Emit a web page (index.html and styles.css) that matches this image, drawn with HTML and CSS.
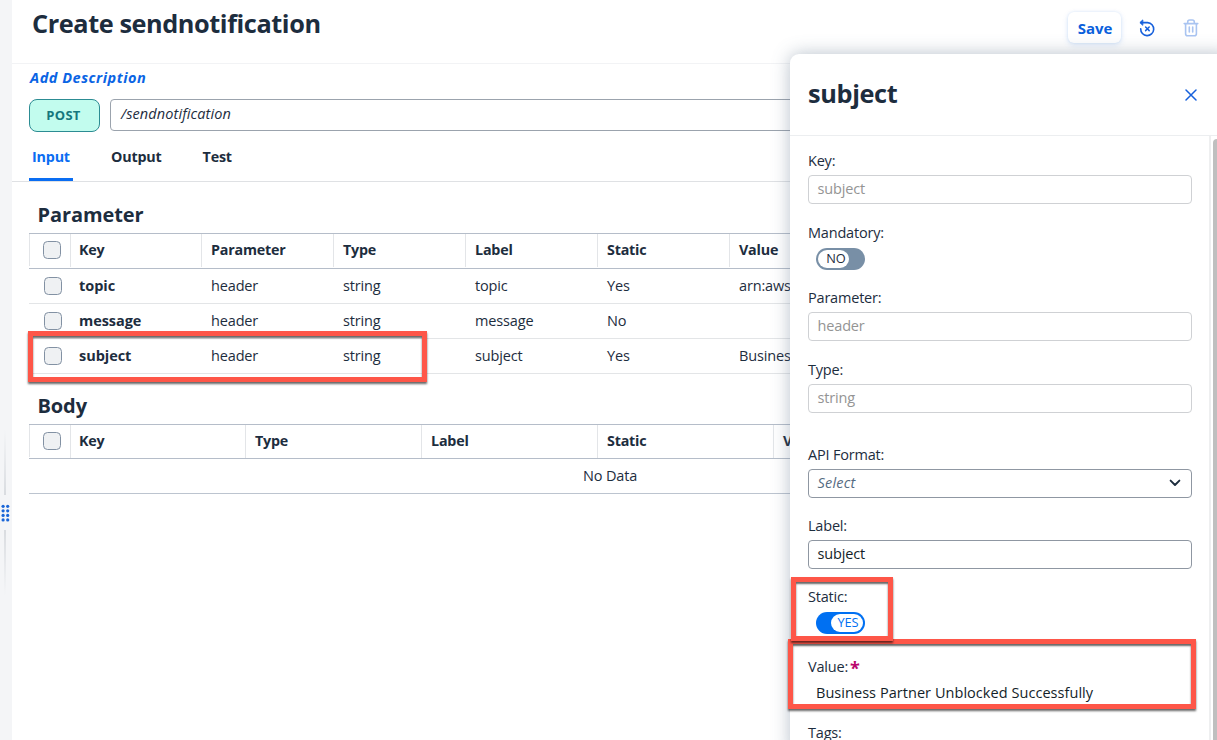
FILE: index.html
```html
<!DOCTYPE html>
<html lang="en">
<head>
<meta charset="utf-8">
<title>Create sendnotification</title>
<link rel="stylesheet" href="styles.css">
</head>
<body>
<div class="app">
  <div class="splitter">
    <div class="splitter-line up"></div>
    <svg class="grip" width="10" height="20" viewBox="0 0 10 20" fill="#1a66d8">
      <circle cx="3.1" cy="3.3" r="1.6"/><circle cx="7.7" cy="3.3" r="1.6"/>
      <circle cx="3.1" cy="7.8" r="1.6"/><circle cx="7.7" cy="7.8" r="1.6"/>
      <circle cx="3.1" cy="12.4" r="1.6"/><circle cx="7.7" cy="12.4" r="1.6"/>
      <circle cx="3.1" cy="16.9" r="1.6"/><circle cx="7.7" cy="16.9" r="1.6"/>
    </svg>
    <div class="splitter-line down"></div>
  </div>
  <main class="main">
    <header class="header">
      <h1 class="title">Create sendnotification</h1>
      <div class="actions">
        <button class="save">Save</button>
        <svg class="icon-reset" width="18" height="18" viewBox="0 0 18 18" fill="none" stroke="#1660dc" stroke-width="1.6" stroke-linecap="round" stroke-linejoin="round">
          <path d="M3.2 3.6H9.6a6.5 6.5 0 1 1-6.9 6.2"/>
          <path d="M4.5 1.2 1.9 3.6l2.6 2.4z" fill="#1660dc" stroke-width="1"/>
          <path d="M7.6 8l3.6 3.6M11.2 8 7.6 11.6" stroke-width="1.5"/>
        </svg>
        <svg class="icon-trash" width="16" height="18" viewBox="0 0 16 18" fill="none" stroke="#a9c4f1" stroke-width="1.6" stroke-linecap="round" stroke-linejoin="round">
          <path d="M1.2 4.6h13.6M4.7 4.4V3a2 2 0 0 1 2-2h2.6a2 2 0 0 1 2 2v1.4M2.6 4.8v10a2 2 0 0 0 2 2h6.8a2 2 0 0 0 2-2v-10M6.3 8v5M9.7 8v5"/>
        </svg>
      </div>
    </header>
    <a class="add-desc">Add Description</a>
    <div class="endpoint">
      <span class="method">POST</span>
      <div class="url">/sendnotification</div>
    </div>
    <nav class="tabs">
      <span class="tab active">Input</span>
      <span class="tab">Output</span>
      <span class="tab">Test</span>
    </nav>
    <h2 class="section">Parameter</h2>
    <div class="table params">
      <div class="row head"><div class="cell check"><i class="box"></i></div><div class="cell">Key</div><div class="cell">Parameter</div><div class="cell">Type</div><div class="cell">Label</div><div class="cell">Static</div><div class="cell">Value</div></div>
      <div class="row"><div class="cell check"><i class="box"></i></div><div class="cell key">topic</div><div class="cell">header</div><div class="cell">string</div><div class="cell">topic</div><div class="cell">Yes</div><div class="cell">arn:aws</div></div>
      <div class="row"><div class="cell check"><i class="box"></i></div><div class="cell key">message</div><div class="cell">header</div><div class="cell">string</div><div class="cell">message</div><div class="cell">No</div><div class="cell"></div></div>
      <div class="row"><div class="cell check"><i class="box"></i></div><div class="cell key">subject</div><div class="cell">header</div><div class="cell">string</div><div class="cell">subject</div><div class="cell">Yes</div><div class="cell">Busines</div></div>
    </div>
    <h2 class="section">Body</h2>
    <div class="table body">
      <div class="row head"><div class="cell check"><i class="box"></i></div><div class="cell">Key</div><div class="cell">Type</div><div class="cell">Label</div><div class="cell">Static</div><div class="cell">V</div></div>
      <div class="empty">No Data</div>
    </div>
  </main>

  <aside class="panel">
    <div class="panel-head">
      <h2 class="panel-title">subject</h2>
      <svg width="12" height="12" viewBox="0 0 12 12" stroke="#1660dc" stroke-width="1.5" stroke-linecap="round"><path d="M1 1l10 10M11 1 1 11"/></svg>
    </div>
    <div class="panel-body">
      <div class="form">
        <div class="field"><label>Key:</label><div class="input readonly">subject</div></div>
        <div class="field switch-field"><label>Mandatory:</label><div class="switch off"><span>NO</span></div></div>
        <div class="field"><label>Parameter:</label><div class="input readonly">header</div></div>
        <div class="field type"><label>Type:</label><div class="input readonly">string</div></div>
        <div class="field select-field"><label>API Format:</label>
          <div class="input select"><em>Select</em><svg width="12" height="8" viewBox="0 0 12 8" fill="none" stroke="#1d2d3e" stroke-width="1.9" stroke-linecap="round" stroke-linejoin="round"><path d="M1.6 1.6 6 6l4.4-4.4"/></svg></div></div>
        <div class="field label-field"><label>Label:</label><div class="input">subject</div></div>
        <div class="field static-field"><label>Static:</label><div class="switch on"><span>YES</span></div></div>
        <div class="field value-field"><label>Value:<b class="req">*</b></label><div class="value">Business Partner Unblocked Successfully</div></div>
        <div class="field"><label>Tags:</label></div>
      </div>
      <div class="scroll"><div class="thumb"></div></div>
    </div>
  </aside>

  <div class="mark mark-row"></div>
  <div class="mark mark-value"></div>
  <div class="mark mark-static"></div>
</div>
</body>
</html>
```
FILE: styles.css
```css
* { box-sizing: border-box; }
body { margin: 0; font-family: "Open Sans", "Noto Sans", sans-serif; font-size: 14.5px; letter-spacing: -.15px; color: #1d2d3e; background: #fff; }
h1, h2 { margin: 0; font-weight: 700; white-space: nowrap; }
svg { display: block; flex: none; }
.app { position: relative; display: flex; width: 1217px; height: 740px; overflow: hidden; }

.splitter { width: 12px; flex: none; background: #f4f5f7; display: flex; flex-direction: column; padding-top: 430px; }
.splitter-line { width: 1.5px; height: 65px; margin-left: 4px; }
.up { background: linear-gradient(#f4f5f7, #d9dce0); }
.down { background: linear-gradient(#d9dce0, #f4f5f7); }
.grip { margin: 8px 0 7px; }

.main { flex: 1; min-width: 0; display: flex; flex-direction: column; align-items: stretch; }
.header { height: 64px; flex: none; border-bottom: 1.5px solid #f2f3f5; display: flex; justify-content: space-between; align-items: flex-start; padding: 0 18px 0 20px; }
.title { font-size: 25.3px; line-height: 34px; padding-top: 6px; letter-spacing: -.42px; }
.actions { display: flex; align-items: center; padding-top: 12px; }
.save { width: 53px; height: 31px; border: 0; padding: 0 0 0 1px; border-radius: 6px; background: #fff; color: #0a5fdc; font: 700 15px/30px "Open Sans", sans-serif; box-shadow: 0 0 3px rgba(0, 100, 217, .13), 0 2px 6px rgba(0, 100, 217, .13); }
.icon-reset { margin-left: 17px; }
.icon-trash { margin-left: 27px; }

.add-desc { margin: 4px 0 0 18px; height: 20px; line-height: 20px; font-weight: 700; font-style: italic; letter-spacing: .53px; color: #0a64e4; }
.endpoint { display: flex; gap: 10px; margin: 11px 0 0 17px; height: 33px; flex: none; }
.method { width: 71px; height: 33px; border: 1.5px solid #2c8c93; border-radius: 8px; background: #c2fcee; color: #16777d; font-weight: 700; font-size: 13px; letter-spacing: .3px; line-height: 30px; padding-right: 2px; text-align: center; }
.url { flex: 1; height: 31.5px; border: 1.5px solid #9ba3ad; border-radius: 4px; padding-left: 10px; font-style: italic; letter-spacing: .1px; line-height: 28px; }
.tabs { display: flex; height: 50px; flex: none; border-bottom: 1.5px solid #dfe1e4; padding-left: 17px; }
.tab { font-weight: 700; font-size: 14.3px; letter-spacing: -.18px; line-height: 20px; padding: 15px 3px 0; margin-right: 35px; }
.tab.active { color: #0a6df2; border-bottom: 3px solid #0a6df2; width: 44px; border-radius: 2px 2px 0 0; }

.section { font-size: 20px; letter-spacing: -.1px; line-height: 26px; margin: 20px 0 5px 25.5px; }
.params + .section { margin-top: 19px; }
.table { margin-left: 17px; width: 1100px; border-top: 1px solid #b5bdc9; }
.row { display: grid; height: 35px; border-bottom: 1px solid #e3e5e7; }
.params .row { grid-template-columns: 41px 131px repeat(5, 132px); }
.body .row { grid-template-columns: 41px 175px repeat(4, 176px); }
.cell { padding-left: 10px; line-height: 34px; white-space: nowrap; }
.cell:nth-child(2) { padding-left: 9px; }
.row.head { font-weight: 700; font-size: 14.3px; letter-spacing: -.2px; height: 34.5px; border-bottom: 1px solid #b5bdc9; }
.head .cell { border-left: 1px solid #e3e5e8; line-height: 32px; height: 33px; padding-left: 9px; }
.head .cell:nth-child(2) { padding-left: 8px; }
.key { font-weight: 700; letter-spacing: -.05px; }
.cell.check { display: flex; align-items: center; padding-left: 15px; height: 34px; }
.head .cell.check { padding-left: 13px; height: 32px; }
.box { width: 18px; height: 18px; border: 1.3px solid #8291a3; border-radius: 4.5px; background: #eff1f3; }
.empty { height: 34.5px; line-height: 33px; border-bottom: 1.5px solid #bcc4cf; padding-left: 554px; }

.panel { position: absolute; left: 790px; top: 54px; width: 440px; height: 700px; background: #fff; border-radius: 9px 0 0 0; box-shadow: 0 0 18px rgba(85, 107, 130, .42); }
.panel-head { height: 82px; border-bottom: 1.5px solid #eceef0; display: flex; align-items: center; justify-content: space-between; padding: 0 33px 0 18px; }
.panel-title { font-size: 25.3px; letter-spacing: -.35px; line-height: 34px; padding-bottom: 3px; }
.panel-body { display: flex; width: 427px; height: 604px; }
.form { flex: 1; padding: 15px 17px 0 18px; }
.field { height: 72px; }
.field label { display: block; height: 20px; line-height: 20px; margin-bottom: 4px; white-space: nowrap; letter-spacing: -.2px; }
.switch-field { height: 65px; }
.type { height: 84px; }
.select-field { padding-top: .5px; }
.label-field { height: 71px; }
.static-field { height: 70px; }
.value-field { height: 66px; }
.input { width: 384px; height: 29px; border: 1px solid #8f97a2; border-radius: 4px; line-height: 26px; padding: 0 10px 0 8.5px; color: #131e29; }
.input.readonly { border-color: #cfd1d4; color: #949494; }
.select { display: flex; align-items: center; justify-content: space-between; }
.select em { color: #556b82; letter-spacing: .2px; }
.switch { margin: 5px 0 0 8px; width: 48.5px; height: 21.5px; border-radius: 11px; display: flex; padding: 2px; }
.switch span { height: 17.5px; line-height: 17.5px; border-radius: 9px; background: #fff; font-size: 12.8px; text-align: center; }
.off { background: #788fa6; }
.off span { width: 31px; padding-left: 5px; }
.on { background: #0070f2; justify-content: flex-end; }
.on span { width: 32px; color: #0070f2; padding-left: 3px; }
.req { color: #ba066c; font-size: 18px; line-height: 10px; vertical-align: -3px; margin-left: 2px; }
.value { margin-top: 6px; padding-left: 8px; line-height: 20px; color: #131e29; white-space: nowrap; letter-spacing: .05px; }
.scroll { width: 8px; border-left: 2px solid #eeeff0; padding: 3px 0 0 2px; }
.thumb { height: 601px; background: #bfbfbf; border-radius: 4px 0 0 0; }

.mark { position: absolute; border: 5.5px solid #fe5648; box-shadow: 0 2px 2px rgba(0, 0, 0, .6), inset 0 2px 2px rgba(0, 0, 0, .6); }
.mark-row { left: 28px; top: 331px; width: 399px; height: 51px; }
.mark-static { left: 791px; top: 577px; width: 102px; height: 64px; }
.mark-value { left: 788px; top: 639px; width: 407.5px; height: 70px; }
```
